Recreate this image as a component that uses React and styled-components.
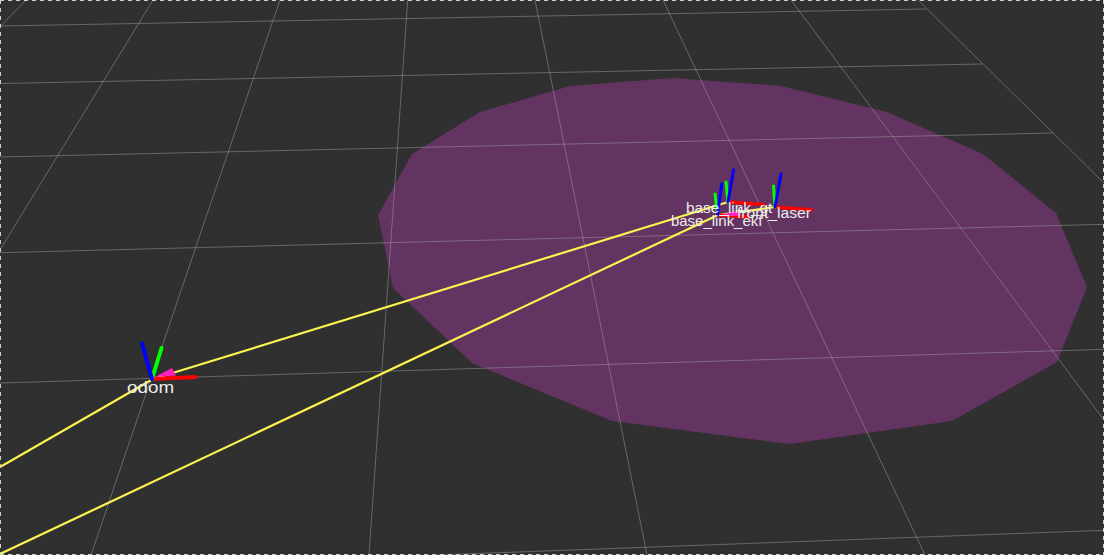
import React from 'react';
import styled, { createGlobalStyle } from 'styled-components';

const GlobalStyle = createGlobalStyle`
  html, body {
    margin: 0;
    padding: 0;
    background: #303030;
  }
`;

const Viewport = styled.div`
  position: relative;
  width: 1104px;
  height: 555px;
  overflow: hidden;
  background: #303030;
`;

const Scene = styled.svg`
  display: block;
`;

// dashed focus frame round the render panel
const FocusFrame = styled.div`
  position: absolute;
  inset: 0;
  pointer-events: none;
  background:
    repeating-linear-gradient(90deg, #d0d0d0 0 4px, transparent 4px 8px) top left / 100% 1px no-repeat,
    repeating-linear-gradient(90deg, #d0d0d0 0 4px, transparent 4px 8px) bottom left / 100% 1px no-repeat,
    repeating-linear-gradient(180deg, #d0d0d0 0 4px, transparent 4px 8px) top left / 1px 100% no-repeat,
    repeating-linear-gradient(180deg, #d0d0d0 0 4px, transparent 4px 8px) top right / 1px 100% no-repeat;
`;

const FrameLabel = styled.span`
  position: absolute;
  left: ${(p) => p.$x}px;
  top: ${(p) => p.$y}px;
  font-family: 'Liberation Sans', Arial, sans-serif;
  font-size: ${(p) => p.$size}px;
  line-height: 1;
  color: #ececec;
  white-space: nowrap;
  transform: scaleX(${(p) => p.$stretch});
  transform-origin: left center;
`;

const gridLines = [
  [0, 26, 926, 9],
  [0, 83.5, 982, 64],
  [0, 157, 1053, 133],
  [0, 252.7, 1104, 224.3],
  [0, 383, 1104, 349.3],
  [437, 555, 1104, 530.3],
  [0, 27, 26, 0],
  [153, 0, 0, 250],
  [280, 0, 91, 555],
  [407.7, 0, 369, 555],
  [535, 0, 647, 555],
  [663, 0, 925, 555],
  [791, 0, 1104, 420],
  [918, 0, 1104, 183],
];

const footprint =
  '378,215 412,154 480,112 570,86 673,78 781,86 887,112 983,154 1056,213 1087,287 1057,362 952,421 790,444 612,421 472,363 393,288';

const links = [
  [0, 467, 153, 379],
  [153, 379, 728, 202],
  [0, 554, 718, 215],
  [718, 215, 775, 207],
];

const frames = [
  { x: 152, y: 379, green: [161.5, 348], blue: [142, 343.5], red: [197, 377], w: 4, redW: 4 },
  { x: 728, y: 202, green: [726, 182], blue: [733.5, 170], red: [765, 204.5], w: 3, redW: 3.6 },
  { x: 717.5, y: 215, green: [715, 194], blue: [721.7, 184], red: [750, 217], w: 3, redW: 3.6 },
  { x: 775, y: 207, green: [773.5, 186], blue: [781, 174], red: [813, 210], w: 3, redW: 3.6 },
];

function Frame({ x, y, green, blue, red, w, redW }) {
  return (
    <g strokeWidth={w}>
      <line x1={x} y1={y} x2={red[0]} y2={red[1]} stroke="#ff0000" strokeWidth={redW} />
      <line x1={x} y1={y} x2={green[0]} y2={green[1]} stroke="#00ff00" strokeLinecap="round" />
      <line x1={x} y1={y} x2={blue[0]} y2={blue[1]} stroke="#0000ff" strokeLinecap="round" />
    </g>
  );
}

export default function App() {
  return (
    <>
      <GlobalStyle />
      <Viewport>
        <Scene width="1104" height="555" viewBox="0 0 1104 555">
          <polygon points={footprint} fill="#633362" />
          {gridLines.map(([x1, y1, x2, y2], i) => (
            <line key={i} x1={x1} y1={y1} x2={x2} y2={y2} stroke="#a0a0a0" strokeOpacity="0.5" strokeWidth="1" />
          ))}
          {links.map(([x1, y1, x2, y2], i) => (
            <line key={i} x1={x1} y1={y1} x2={x2} y2={y2} stroke="#fbf550" strokeWidth="2.2" />
          ))}
          {frames.map((f) => (
            <Frame key={f.x} {...f} />
          ))}
          <polygon points="155,377 172,368 176,375.5" fill="#ff20c0" />
          <polygon points="719,216 738,210 741,216" fill="#ff20c0" />
        </Scene>
        <FrameLabel $x={127} $y={379} $size={16.5} $stretch={1.14}>odom</FrameLabel>
        <FrameLabel $x={686} $y={201} $size={14.5} $stretch={1.06}>base_link_gt</FrameLabel>
        <FrameLabel $x={671} $y={214} $size={14.5} $stretch={1.03}>base_link_ekf</FrameLabel>
        <FrameLabel $x={737} $y={206} $size={14.5} $stretch={1.08}>front_laser</FrameLabel>
        <FocusFrame />
      </Viewport>
    </>
  );
}
